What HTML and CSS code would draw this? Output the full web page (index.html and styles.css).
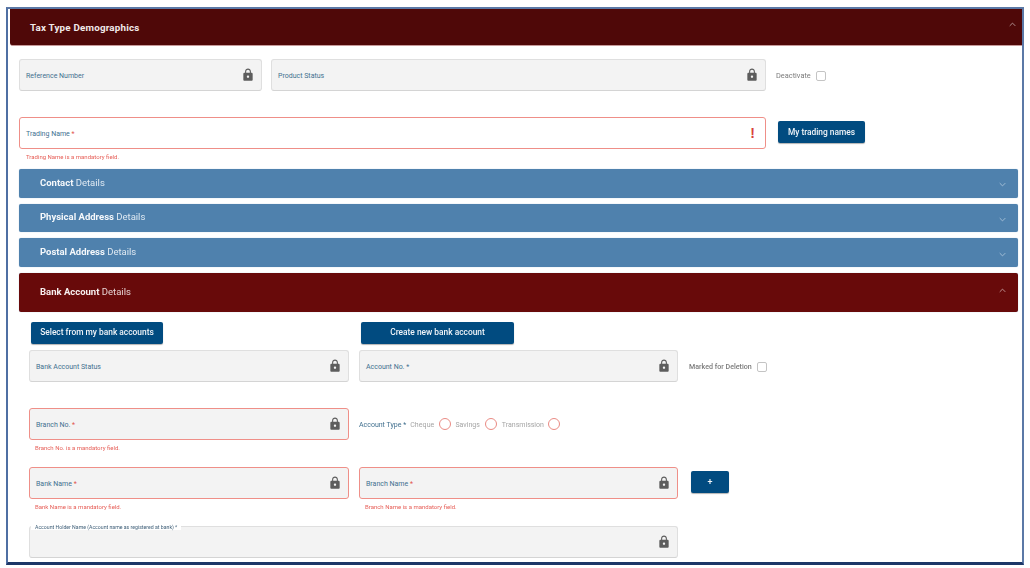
FILE: index.html
```html
<!DOCTYPE html>
<html lang="en">
<head>
<meta charset="utf-8">
<title>Tax Type Demographics</title>
<link rel="stylesheet" href="styles.css">
</head>
<body>
<svg class="defs" width="0" height="0" aria-hidden="true">
  <symbol id="lock" viewBox="0 0 24 24"><path d="M18 8h-1V6c0-2.76-2.24-5-5-5S7 3.24 7 6v2H6c-1.1 0-2 .9-2 2v10c0 1.1.9 2 2 2h12c1.1 0 2-.9 2-2V10c0-1.1-.9-2-2-2zm-6 9c-1.1 0-2-.9-2-2s.9-2 2-2 2 .9 2 2-.9 2-2 2zm3.1-9H8.9V6c0-1.71 1.39-3.1 3.1-3.1 1.71 0 3.1 1.39 3.1 3.1v2z"/></symbol>
  <symbol id="up" viewBox="0 0 10 6"><path d="M1 5l4-4 4 4" fill="none" stroke="currentColor" stroke-width="1.1"/></symbol>
  <symbol id="down" viewBox="0 0 10 6"><path d="M1 1l4 4 4-4" fill="none" stroke="currentColor" stroke-width="1.1"/></symbol>
</svg>
<main class="frame">
  <header class="main-head">
    <h1>Tax Type Demographics</h1>
    <svg class="chev chev-top"><use href="#up"/></svg>
  </header>
  <div class="content">
    <div class="row row-status">
      <div class="field w-ref"><span class="label">Reference Number</span><svg class="lock"><use href="#lock"/></svg></div>
      <div class="field w-status"><span class="label">Product Status</span><svg class="lock"><use href="#lock"/></svg></div>
      <span class="check-label check-deactivate">Deactivate</span><span class="checkbox"></span>
    </div>
    <div class="row row-trading">
      <div class="field field-white invalid w-trading"><span class="label">Trading Name <i>*</i></span><span class="bang">!</span></div>
      <button class="btn btn-trading" type="button">My trading names</button>
    </div>
    <p class="error error-trading">Trading Name is a mandatory field.</p>

    <div class="bars">
      <div class="bar"><span><b>Contact</b> Details</span><svg class="chev"><use href="#down"/></svg></div>
      <div class="bar"><span><b>Physical Address</b> Details</span><svg class="chev"><use href="#down"/></svg></div>
      <div class="bar"><span><b>Postal Address</b> Details</span><svg class="chev"><use href="#down"/></svg></div>
      <div class="bar bar-open"><span><b>Bank Account</b> Details</span><svg class="chev"><use href="#up"/></svg></div>
    </div>

    <section class="bank">
      <div class="row bank-actions">
        <button class="btn btn-select" type="button">Select from my bank accounts</button>
        <button class="btn btn-create" type="button">Create new bank account</button>
      </div>
      <div class="row bank-row1">
        <div class="field w-left"><span class="label">Bank Account Status</span><svg class="lock"><use href="#lock"/></svg></div>
        <div class="field w-right"><span class="label">Account No. <em>*</em></span><svg class="lock"><use href="#lock"/></svg></div>
        <span class="check-label check-marked">Marked for Deletion</span><span class="checkbox"></span>
      </div>
      <div class="row bank-row2">
        <div class="field invalid w-left"><span class="label">Branch No. <i>*</i></span><svg class="lock"><use href="#lock"/></svg></div>
        <div class="radios">
          <span class="label">Account Type <em>*</em></span>
          <span class="opt opt-cheque">Cheque</span><span class="radio"></span>
          <span class="opt opt-savings">Savings</span><span class="radio"></span>
          <span class="opt opt-trans">Transmission</span><span class="radio"></span>
        </div>
      </div>
      <p class="error">Branch No. is a mandatory field.</p>
      <div class="row bank-row3">
        <div class="field invalid w-left"><span class="label">Bank Name <i>*</i></span><svg class="lock"><use href="#lock"/></svg></div>
        <div class="field invalid w-right"><span class="label">Branch Name <i>*</i></span><svg class="lock"><use href="#lock"/></svg></div>
        <button class="btn btn-plus" type="button">+</button>
      </div>
      <div class="errors-pair">
        <p class="error w-left-err">Bank Name is a mandatory field.</p>
        <p class="error">Branch Name is a mandatory field.</p>
      </div>
      <div class="field w-holder">
        <span class="float-label">Account Holder Name (Account name as registered at bank) *</span>
        <svg class="lock"><use href="#lock"/></svg>
      </div>
    </section>
  </div>
</main>
</body>
</html>
```
FILE: styles.css
```css
* { box-sizing: border-box; }
html, body { margin: 0; padding: 0; background: #fff; }
body { width: 1030px; height: 568px; overflow: hidden; font-family: Roboto, "Liberation Sans", sans-serif; }
.defs { position: absolute; }
.frame {
  margin: 7px 6px 0 6px;
  width: 1018px;
  height: 558px;
  border-style: solid;
  border-color: #5b78a6 #5b78a6 #1d3767 #4f6fa3;
  border-width: 2px 2px 3px 2px;
  filter: blur(0.45px);
  overflow: hidden;
}
.main-head {
  margin-left: 2px;
  height: 37px;
  background: #4f0808;
  border-radius: 0 0 0 3px;
  border-bottom: 1px solid #c79a9a;
  display: flex;
  align-items: center;
  justify-content: space-between;
  padding: 0 6px 5px 20px;
  color: #fff;
}
.main-head h1 { margin: 5px 0 0; font-size: 9.8px; font-weight: 700; letter-spacing: .2px; color: #f1e9e9; }
.chev { width: 7px; height: 5px; color: #b9cee0; flex: none; }
.chev-top { color: #c9b3b3; }
.content { padding: 13px 0 0 11px; width: 1010px; }
.row { display: flex; align-items: flex-start; }
.field {
  position: relative;
  height: 32px;
  flex: none;
  display: flex;
  align-items: center;
  justify-content: space-between;
  padding: 0 7px 0 6px;
  background: #f3f3f3;
  border: 1px solid #dfdfdf;
  border-bottom-color: #d4d4d4;
  border-radius: 3px;
}
.field-white { background: #fff; }
.invalid { border-color: #ef8f88; }
.label { font-size: 7px; color: #42708f; white-space: nowrap; padding-top: 1px; }
.bank .label { padding-top: 2px; }
.label i { font-style: normal; color: #e2544d; }
.label em { font-style: normal; color: #42708f; }
.lock { width: 14px; height: 14px; fill: #5d5d5d; flex: none; margin-right: -1px; }
.bang { font-size: 14px; font-weight: 700; color: #d9423a; padding-right: 3px; font-family: "Liberation Sans", sans-serif; }
.w-ref { width: 243px; margin-right: 9px; }
.w-status { width: 495px; }
.w-trading { width: 747px; }
.check-label { font-size: 7.4px; color: #7b7b7b; white-space: nowrap; }
.check-deactivate { margin: 12px 5px 0 10px; }
.check-marked { font-size: 7.1px; margin: 12px 5px 0 11px; font-weight: 500; }
.checkbox { flex: none; width: 10px; height: 10px; margin-top: 12px; border: 1px solid #c4c4c4; border-radius: 2px; background: #fff; }
.row-trading { margin-top: 26px; }
.btn {
  flex: none;
  height: 22px;
  padding: 0;
  border: 0;
  border-radius: 2px;
  background: #014b80;
  box-shadow: 0 1px 1px rgba(0, 0, 0, .3);
  color: #f0f4f8;
  font-family: Roboto, "Liberation Sans", sans-serif;
  font-size: 8.4px;
  font-weight: 500;
}
.bank-actions .btn { padding-bottom: 2px; }
.btn-trading { width: 87px; margin: 4px 0 0 12px; }
.error { margin: 0; height: 20px; padding: 4px 0 0 6px; font-size: 6px; line-height: 8px; color: #e65f58; }
.error-trading { padding-left: 7px; }
.bars { display: flex; flex-direction: column; gap: 6px; width: 999px; }
.bar {
  height: 28.67px;
  background: #4f81ad;
  border-radius: 2px;
  box-shadow: 0 0 1px #9dbbd4;
  display: flex;
  align-items: center;
  justify-content: space-between;
  padding: 0 12px 2px 21px;
  color: #dfe9f2;
  font-size: 9.5px;
}
.bar b { color: #f5f8fb; font-weight: 700; }
.bar .chev { margin-top: 5px; }
.bar-open { height: 39px; background: #680a0a; color: #e6d3d3; }
.bar-open b { color: #f7efef; }
.bar-open .chev { margin-top: -2px; color: #d3b5b5; }
.bank { padding: 10px 0 0 10px; }
.bank-actions { padding-left: 2px; }
.btn-select { width: 132px; }
.btn-create { width: 153px; margin-left: 198px; }
.bank-row1 { margin-top: 6px; }
.w-left { width: 320px; margin-right: 10px; }
.w-right { width: 319px; }
.bank-row2 { margin-top: 26px; }
.radios { display: flex; align-items: center; height: 32px; }
.opt { font-size: 7px; color: #a5a5a5; margin-right: 5px; padding-top: 2px; }
.opt-cheque { margin-left: 4px; letter-spacing: .1px; }
.opt-savings { margin-left: 4px; }
.opt-trans { margin-left: 5px; margin-right: 4px; }
.radio { flex: none; width: 12px; height: 12px; border: 1px solid #e98a83; border-radius: 50%; background: #fff; }
.bank-row2 + .error { height: 27px; }
.btn-plus { width: 38px; margin: 4px 0 0 13px; font-size: 9px; }
.errors-pair { display: flex; }
.errors-pair .error { height: 27px; }
.w-left-err { width: 330px; }
.w-holder { width: 649px; justify-content: flex-end; }
.float-label {
  position: absolute;
  left: 1px;
  top: -3px;
  padding: 0 4px;
  font-size: 5.2px;
  line-height: 6px;
  color: #3f5f78;
  background: #fff;
  white-space: nowrap;
}
```
